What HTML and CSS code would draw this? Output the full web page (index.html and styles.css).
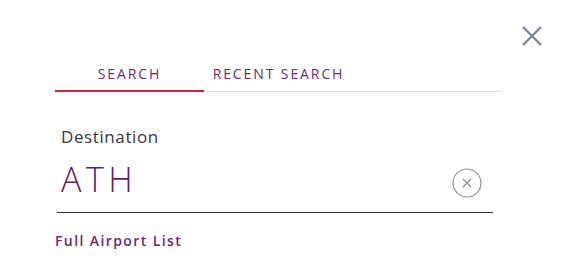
FILE: index.html
```html
<!DOCTYPE html>
<html lang="en">
<head>
<meta charset="utf-8">
<title>Search</title>
<link rel="stylesheet" href="styles.css">
</head>
<body>
<div class="modal">
  <div class="close-row">
    <button class="close" aria-label="Close">
      <svg width="20" height="20" viewBox="0 0 20 20"><path d="M1 1L19 19M19 1L1 19" stroke="#7d8698" stroke-width="2.4" stroke-linecap="butt" fill="none"/></svg>
    </button>
  </div>
  <div class="tabs">
    <div class="tab active">SEARCH</div>
    <div class="tab">RECENT SEARCH</div>
  </div>
  <div class="field">
    <label class="label">Destination</label>
    <div class="input-row">
      <span class="value">ATH</span>
      <button class="clear" aria-label="Clear">
        <svg width="30" height="30" viewBox="0 0 30 30"><circle cx="15" cy="15" r="14" stroke="#8e94a3" stroke-width="1.2" fill="none"/><path d="M11 11L19 19M19 11L11 19" stroke="#8e94a3" stroke-width="1.4" fill="none"/></svg>
      </button>
    </div>
  </div>
  <a class="full-list" href="#">Full Airport List</a>
</div>
</body>
</html>
```
FILE: styles.css
```css
html, body {
  margin: 0;
  padding: 0;
  background: #fff;
}
body {
  font-family: "Open Sans", "Liberation Sans", sans-serif;
  width: 561px;
  height: 274px;
  overflow: hidden;
}
.modal {
  display: flex;
  flex-direction: column;
}
.close-row {
  display: flex;
  justify-content: flex-end;
  padding: 26px 19px 0 0;
}
.close {
  border: 0;
  padding: 0;
  background: none;
  width: 20px;
  height: 20px;
  display: block;
}
.close svg { display: block; }
.tabs {
  display: flex;
  margin: 20px 0 0 55px;
  width: 446px;
  border-bottom: 1px solid #dcdcdc;
}
.tab {
  width: 149px;
  text-align: center;
  font-size: 14px;
  line-height: 16px;
  letter-spacing: 1.9px;
  color: #6a2c70;
  padding-bottom: 9px;
}
.tab.active {
  border-bottom: 2px solid #d2213a;
  margin-bottom: -1px;
  padding-bottom: 8px;
}
.field {
  margin: 35px 0 0 57px;
  width: 436px;
  border-bottom: 1px solid #333;
}
.label {
  display: block;
  padding-left: 4px;
  font-size: 17px;
  line-height: 20px;
  color: #383838;
  letter-spacing: 0.6px;
}
.input-row {
  display: flex;
  align-items: flex-start;
  justify-content: space-between;
  padding: 12px 11px 13px 4px;
}
.value {
  font-size: 34px;
  line-height: 40px;
  font-weight: 300;
  color: #5c1f6a;
  letter-spacing: 4.5px;
}
.clear {
  border: 0;
  padding: 0;
  margin-top: 9px;
  background: none;
  width: 30px;
  height: 30px;
}
.clear svg { display: block; }
.full-list {
  margin: 20px 0 0 55px;
  font-size: 14px;
  line-height: 16px;
  font-weight: 600;
  letter-spacing: 1.4px;
  color: #6a2c70;
  text-decoration: none;
  align-self: flex-start;
}
```
